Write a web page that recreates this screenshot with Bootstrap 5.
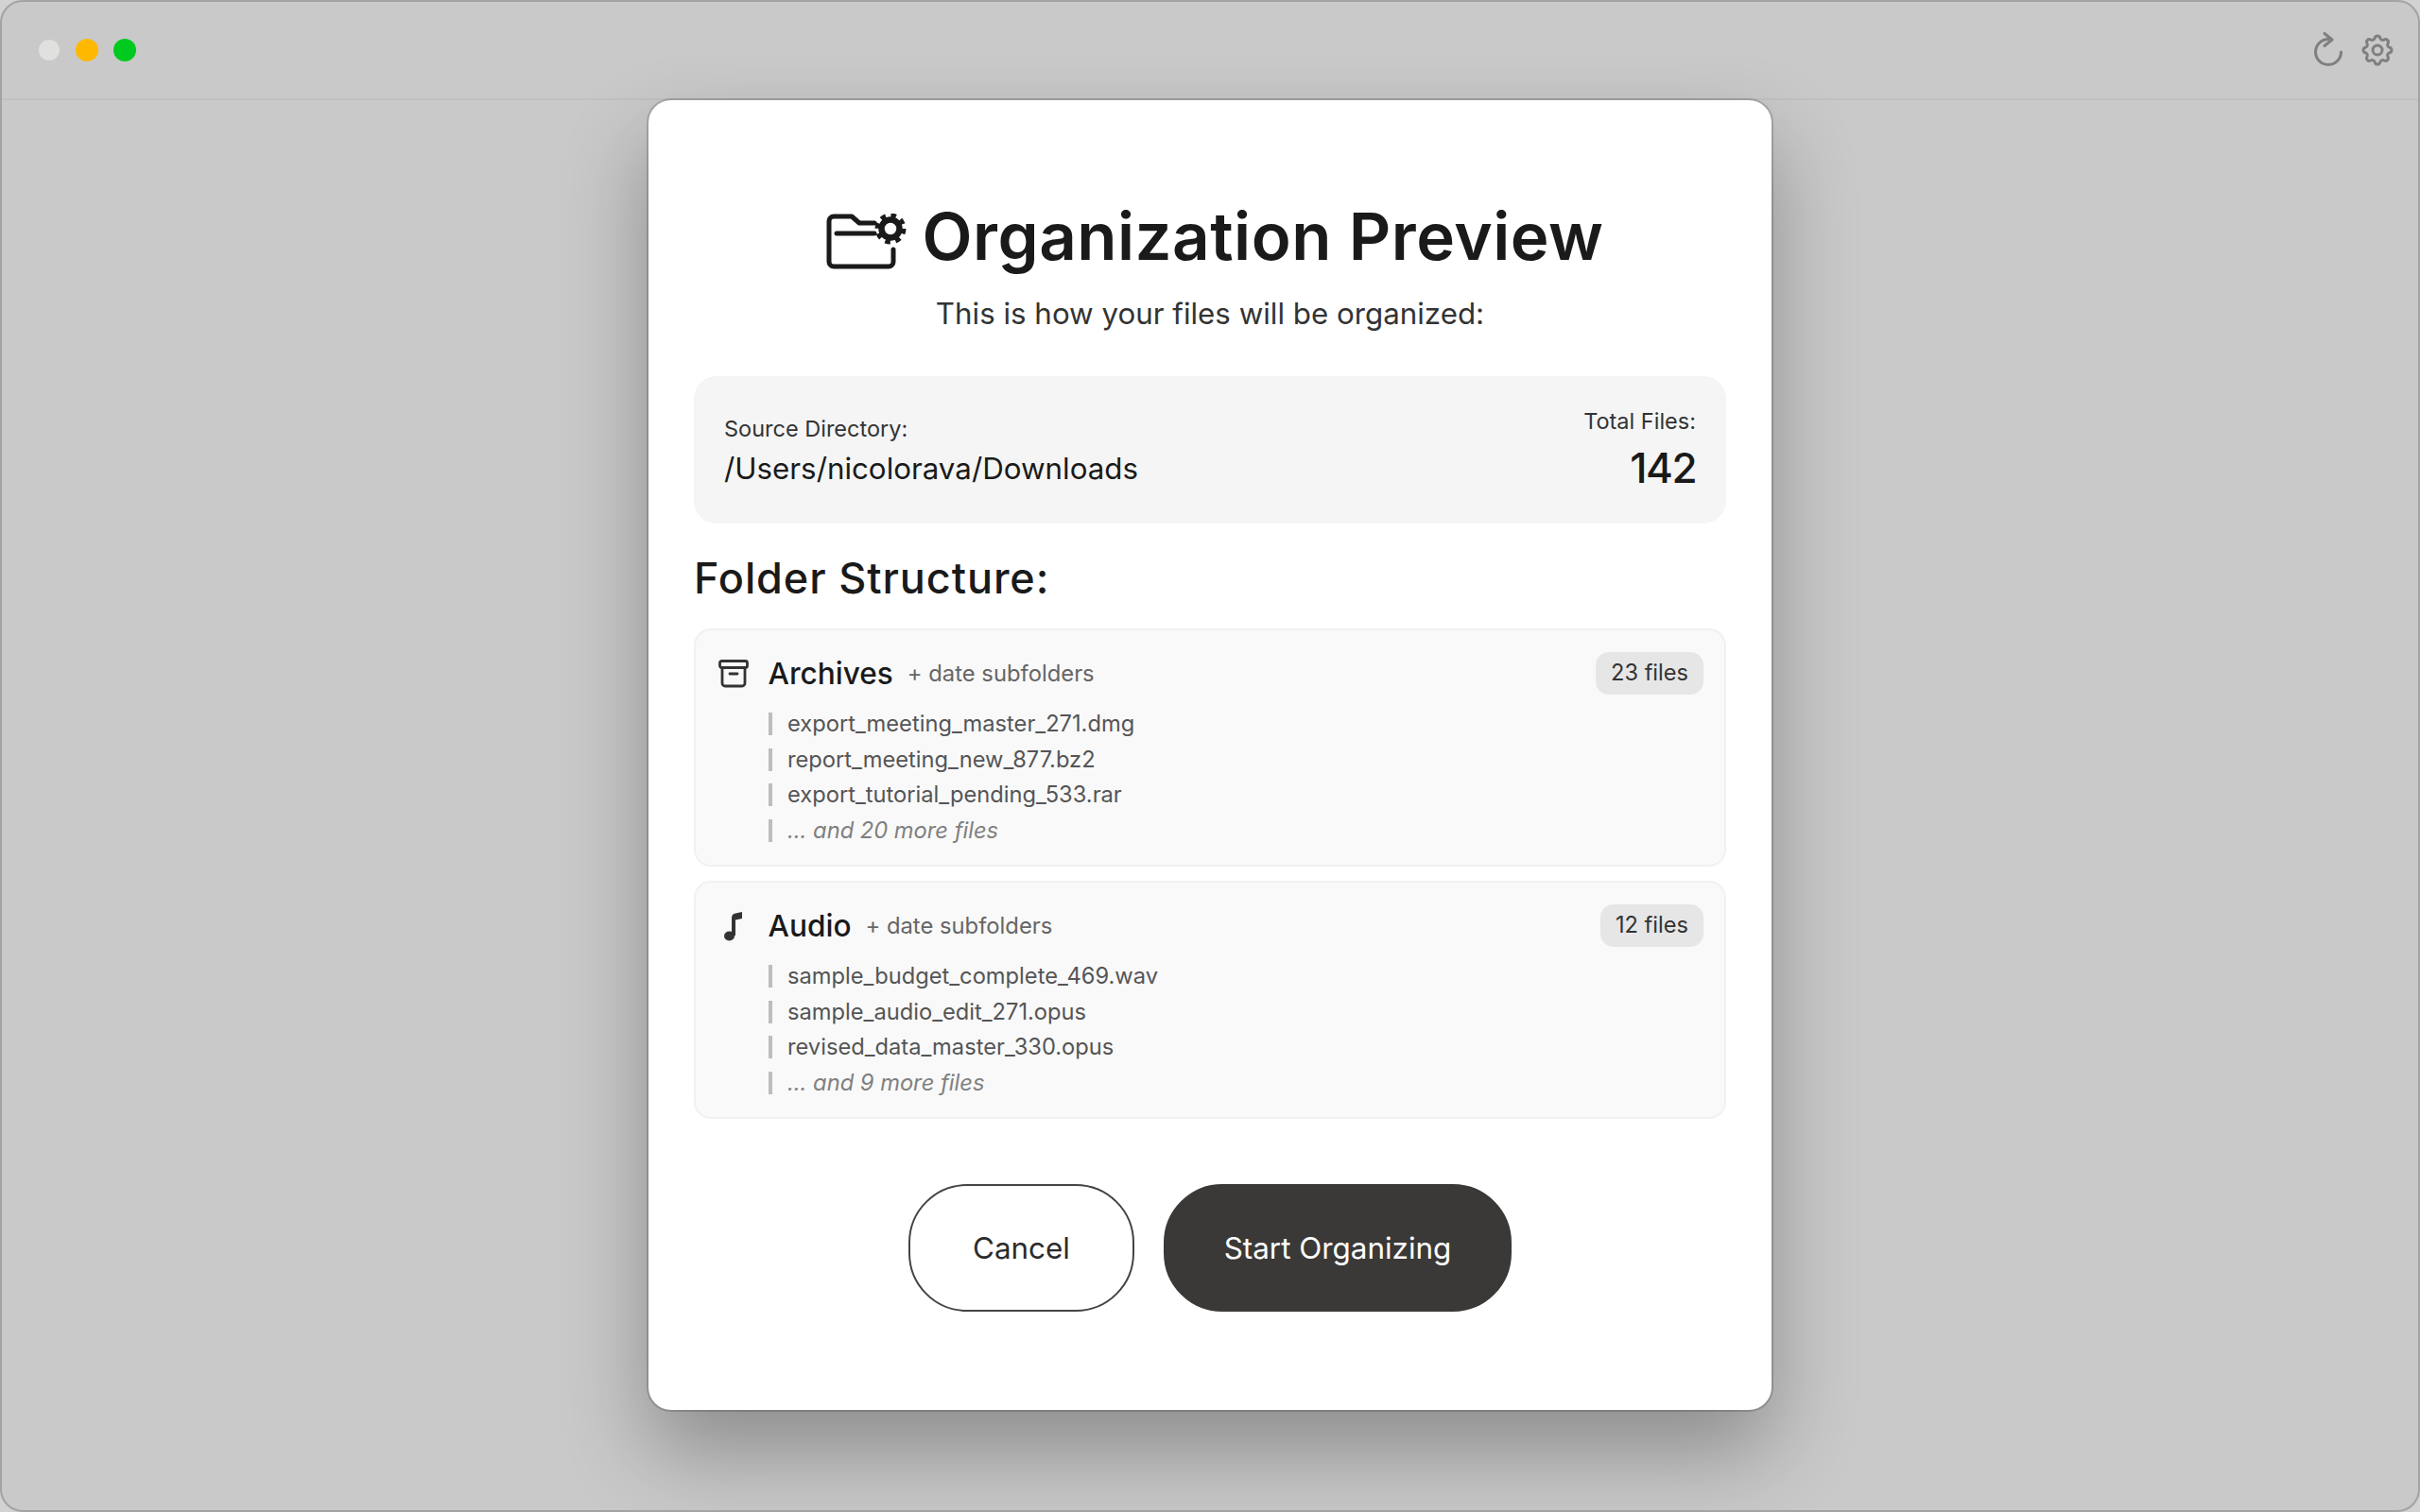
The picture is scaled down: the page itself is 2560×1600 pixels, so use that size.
<!DOCTYPE html>
<html lang="en">
<head>
<meta charset="utf-8">
<title>Organization Preview</title>
<link href="https://cdn.jsdelivr.net/npm/bootstrap@5.3.0/dist/css/bootstrap.min.css" rel="stylesheet">
<style>
html,body{height:100%;margin:0;}
body{background:#d2d2d2;font-family:Inter,"Liberation Sans",sans-serif;color:#1a1a1a;overflow:hidden;}
.app-window{height:1600px;background:#c9c9c9;border:2px solid #a3a3a3;border-radius:24px;overflow:hidden;}
.app-bar{height:104px;padding:0 23px 0 38px;border-bottom:2px solid #c1c1c1;}
.light{width:24px;height:24px;border-radius:50%;}
.light-off{background:#e0e0de;width:22px;height:22px;margin:1px;}
.light-amber{background:#ffb800;}
.light-green{background:#00c91f;}
.lights{gap:16px;}
.bar-icons{gap:13px;color:#7f7f7f;}
.sheet{width:1188px;height:1386px;background:#fff;border-radius:24px;padding:104px 48px 0;box-shadow:0 0 0 2px rgba(0,0,0,.16),0 44px 90px rgba(0,0,0,.3);}
.sheet-title{font-size:69px;line-height:80px;font-weight:600;margin:0;padding-left:10px;color:#1a1a1a;letter-spacing:.5px;gap:16px;}
.title-ico{margin-top:14px;}
.sheet-sub{font-size:31.3px;line-height:40px;margin:22px 0 46px;color:#333;}
.source-box{height:156px;background:#f5f5f5;border-radius:24px;padding:0 32px;}
.lbl{font-size:23.5px;line-height:32px;color:#333;}
.src-left{padding-top:3px;}
.src-right{padding-top:1px;}
.path-val{font-size:31.3px;line-height:44px;margin-top:4px;color:#1a1a1a;}
.count-val{font-size:44px;line-height:56px;font-weight:500;margin-top:5px;letter-spacing:-1.5px;color:#1a1a1a;}
.section-head{font-size:45px;line-height:56px;font-weight:500;letter-spacing:.9px;margin:30px 0 25px;color:#1a1a1a;}
.folders{gap:15px;}
.folder-card{height:252px;background:#f9f9f9;border:2px solid #f1f1f1;border-radius:18px;padding:23px 22px 0 24px;}
.folder-head{height:45px;}
.folder-ico{width:32px;margin-right:20.500px;color:#333;}
.folder-name{font-size:31.6px;line-height:40px;font-weight:500;color:#1a1a1a;margin-right:15px;}
.folder-note{font-size:23.8px;line-height:32px;color:#666;}
.count-pill{font-size:23.6px;line-height:32px;font-weight:400;color:#333;background:#e6e6e6;border-radius:14px;padding:6px 16px 7px;}
.file-list{margin:19px 0 0 53px;padding:0;list-style:none;}
.file-list li{border-left:4px solid #bdbdbd;padding-left:16px;font-size:23.7px;line-height:24px;margin-bottom:13.6px;color:#555;}
.file-list li.more{font-style:italic;color:#808080;}
.actions{gap:31px;margin-top:69px;}
.act-btn{height:135px;font-size:31.4px;line-height:40px;border-radius:62px;padding:0;}
.act-cancel{width:239px;background:#fff;border:2px solid #444;color:#2b2b2b;}
.act-start{width:368px;background:#3a3937;border:2px solid #3a3937;color:#fff;}
</style>
</head>
<body>
<div class="app-window d-flex flex-column">
  <div class="app-bar d-flex align-items-center justify-content-between flex-shrink-0">
    <div class="lights d-flex align-items-center">
      <span class="light light-off"></span><span class="light light-amber"></span><span class="light light-green"></span>
    </div>
    <div class="bar-icons d-flex align-items-center">
      <svg width="38" height="38" viewBox="0 0 38 38" fill="none" stroke="currentColor" stroke-width="3" stroke-linecap="round" stroke-linejoin="round"><path d="M32.5 21a13.5 13.5 0 1 1-13.5-13.5"/><path d="M15 1.5l8 6.5-8 6.500"/></svg>
      <svg width="40" height="40" viewBox="0 0 24 24" fill="none" stroke="currentColor" stroke-width="1.8" stroke-linecap="round" stroke-linejoin="round"><path d="M10.325 4.317c.426-1.756 2.924-1.756 3.35 0a1.724 1.724 0 0 0 2.573 1.066c1.543-.94 3.31.826 2.37 2.37a1.724 1.724 0 0 0 1.065 2.572c1.756.426 1.756 2.924 0 3.35a1.724 1.724 0 0 0-1.066 2.573c.94 1.543-.826 3.31-2.37 2.37a1.724 1.724 0 0 0-2.572 1.065c-.426 1.756-2.924 1.756-3.35 0a1.724 1.724 0 0 0-2.573-1.066c-1.543.94-3.31-.826-2.37-2.37a1.724 1.724 0 0 0-1.065-2.572c-1.756-.426-1.756-2.924 0-3.35a1.724 1.724 0 0 0 1.066-2.573c-.94-1.543.826-3.31 2.37-2.37 1 .608 2.296.07 2.572-1.065z"/><circle cx="12" cy="12" r="3"/></svg>
    </div>
  </div>
  <div class="d-flex justify-content-center">
    <div class="sheet">
      <h1 class="sheet-title d-flex align-items-center justify-content-center">
        <svg class="title-ico" width="86" height="62" viewBox="0 0 86 62" fill="none" stroke="#1a1a1a" stroke-width="5" stroke-linecap="round" stroke-linejoin="round"><path d="M51 10H35L27 3H8a5 5 0 0 0-5 5v43a5 5 0 0 0 5 5h58a5 5 0 0 0 5-5V38"/><path d="M11 21h40"/><circle cx="68" cy="16" r="9.500" stroke-width="6.500"/><circle cx="68" cy="16" r="14" stroke-width="5" stroke-dasharray="5.500 5.500" stroke-linecap="butt"/></svg>
        <span>Organization Preview</span>
      </h1>
      <p class="sheet-sub text-center">This is how your files will be organized:</p>
      <div class="source-box d-flex align-items-center justify-content-between">
        <div class="src-left">
          <div class="lbl">Source Directory:</div>
          <div class="path-val">/Users/nicolorava/Downloads</div>
        </div>
        <div class="src-right text-end">
          <div class="lbl">Total Files:</div>
          <div class="count-val">142</div>
        </div>
      </div>
      <h2 class="section-head">Folder Structure:</h2>
      <div class="folders d-flex flex-column">
        <div class="folder-card">
          <div class="folder-head d-flex align-items-center">
            <span class="folder-ico d-flex">
              <svg width="32" height="30" viewBox="0 0 32 30" fill="none" stroke="currentColor" stroke-width="2.800" stroke-linecap="round" stroke-linejoin="round"><rect x="1.500" y="1.500" width="29" height="7" rx="2"/><path d="M4 8.500V25a3 3 0 0 0 3 3h18a3 3 0 0 0 3-3V8.500"/><path d="M12 15h8"/></svg>
            </span>
            <span class="folder-name">Archives</span>
            <span class="folder-note">+ date subfolders</span>
            <span class="badge count-pill ms-auto">23 files</span>
          </div>
          <ul class="file-list">
            <li>export_meeting_master_271.dmg</li>
            <li>report_meeting_new_877.bz2</li>
            <li>export_tutorial_pending_533.rar</li>
            <li class="more">... and 20 more files</li>
          </ul>
        </div>
        <div class="folder-card">
          <div class="folder-head d-flex align-items-center">
            <span class="folder-ico d-flex justify-content-center">
              <svg width="22" height="32" viewBox="0 0 22 32" fill="#333"><ellipse cx="6.500" cy="26.500" rx="5.500" ry="5"/><path d="M9 26V7.500C9 4.500 10.500 3 13 2.500L20 1v7l-7 1.500V26z"/></svg>
            </span>
            <span class="folder-name">Audio</span>
            <span class="folder-note">+ date subfolders</span>
            <span class="badge count-pill ms-auto">12 files</span>
          </div>
          <ul class="file-list">
            <li>sample_budget_complete_469.wav</li>
            <li>sample_audio_edit_271.opus</li>
            <li>revised_data_master_330.opus</li>
            <li class="more">... and 9 more files</li>
          </ul>
        </div>
      </div>
      <div class="actions d-flex justify-content-center">
        <button type="button" class="btn act-btn act-cancel">Cancel</button>
        <button type="button" class="btn act-btn act-start">Start Organizing</button>
      </div>
    </div>
  </div>
</div>
<script src="https://cdn.jsdelivr.net/npm/bootstrap@5.3.0/dist/js/bootstrap.bundle.min.js"></script>
</body>
</html>
